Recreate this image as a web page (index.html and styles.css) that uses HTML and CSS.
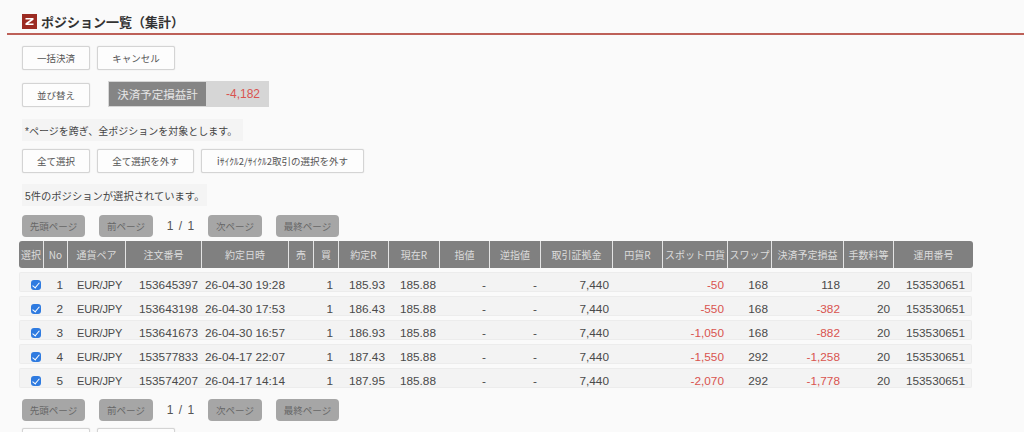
FILE: index.html
```html
<!DOCTYPE html>
<html lang="ja">
<head>
<meta charset="utf-8">
<title>ポジション一覧（集計）</title>
<link rel="stylesheet" href="styles.css">
</head>
<body>
<header class="title-bar">
  <svg class="logo" viewBox="0 0 15 15" aria-hidden="true"><rect width="15" height="15" fill="#9c2b22"/><path d="M3.5 4h8v1.8L6.2 9.4h5.3V11h-8V9.2l5.3-3.6H3.5z" fill="#fff"/></svg>
  <h1>ポジション一覧（集計）</h1>
</header>
<main class="content">
  <div class="btn-row r1">
    <button class="btn w68">一括決済</button>
    <button class="btn w78">キャンセル</button>
  </div>
  <div class="btn-row r2">
    <button class="btn w68">並び替え</button>
    <div class="summary"><span class="summary-label">決済予定損益計</span><span class="summary-value">-4,182</span></div>
  </div>
  <p class="note n1">*ページを跨ぎ、全ポジションを対象とします。</p>
  <div class="btn-row r3">
    <button class="btn w68">全て選択</button>
    <button class="btn w97">全て選択を外す</button>
    <button class="btn w163">iｻｲｸﾙ2/ｻｲｸﾙ2取引の選択を外す</button>
  </div>
  <p class="note n2">5件のポジションが選択されています。</p>
  <nav class="pager p1">
    <button class="pg w63">先頭ページ</button>
    <button class="pg w54">前ページ</button>
    <span class="pg-count">1 / 1</span>
    <button class="pg w54">次ページ</button>
    <button class="pg w63">最終ページ</button>
  </nav>
  <div class="table">
    <div class="grid head">
      <div>選択</div><div>No</div><div>通貨ペア</div><div>注文番号</div><div>約定日時</div><div>売</div><div>買</div><div>約定R</div><div>現在R</div><div>指値</div><div>逆指値</div><div>取引証拠金</div><div>円貨R</div><div>スポット円貨</div><div>スワップ</div><div>決済予定損益</div><div>手数料等</div><div>運用番号</div>
    </div>
    <div class="grid row">
      <div class="chk"><input type="checkbox" checked></div><div class="r">1</div><div class="l">EUR/JPY</div><div class="r">153645397</div><div class="r">26-04-30 19:28</div><div></div><div class="r">1</div><div class="r">185.93</div><div class="r">185.88</div><div class="r">-</div><div class="r">-</div><div class="r">7,440</div><div></div><div class="r neg">-50</div><div class="r">168</div><div class="r">118</div><div class="r">20</div><div class="r">153530651</div>
    </div>
    <div class="grid row">
      <div class="chk"><input type="checkbox" checked></div><div class="r">2</div><div class="l">EUR/JPY</div><div class="r">153643198</div><div class="r">26-04-30 17:53</div><div></div><div class="r">1</div><div class="r">186.43</div><div class="r">185.88</div><div class="r">-</div><div class="r">-</div><div class="r">7,440</div><div></div><div class="r neg">-550</div><div class="r">168</div><div class="r neg">-382</div><div class="r">20</div><div class="r">153530651</div>
    </div>
    <div class="grid row">
      <div class="chk"><input type="checkbox" checked></div><div class="r">3</div><div class="l">EUR/JPY</div><div class="r">153641673</div><div class="r">26-04-30 16:57</div><div></div><div class="r">1</div><div class="r">186.93</div><div class="r">185.88</div><div class="r">-</div><div class="r">-</div><div class="r">7,440</div><div></div><div class="r neg">-1,050</div><div class="r">168</div><div class="r neg">-882</div><div class="r">20</div><div class="r">153530651</div>
    </div>
    <div class="grid row">
      <div class="chk"><input type="checkbox" checked></div><div class="r">4</div><div class="l">EUR/JPY</div><div class="r">153577833</div><div class="r">26-04-17 22:07</div><div></div><div class="r">1</div><div class="r">187.43</div><div class="r">185.88</div><div class="r">-</div><div class="r">-</div><div class="r">7,440</div><div></div><div class="r neg">-1,550</div><div class="r">292</div><div class="r neg">-1,258</div><div class="r">20</div><div class="r">153530651</div>
    </div>
    <div class="grid row">
      <div class="chk"><input type="checkbox" checked></div><div class="r">5</div><div class="l">EUR/JPY</div><div class="r">153574207</div><div class="r">26-04-17 14:14</div><div></div><div class="r">1</div><div class="r">187.95</div><div class="r">185.88</div><div class="r">-</div><div class="r">-</div><div class="r">7,440</div><div></div><div class="r neg">-2,070</div><div class="r">292</div><div class="r neg">-1,778</div><div class="r">20</div><div class="r">153530651</div>
    </div>
  </div>
  <nav class="pager p2">
    <button class="pg w63">先頭ページ</button>
    <button class="pg w54">前ページ</button>
    <span class="pg-count">1 / 1</span>
    <button class="pg w54">次ページ</button>
    <button class="pg w63">最終ページ</button>
  </nav>
  <div class="btn-row r4">
    <button class="btn w68">一括決済</button>
    <button class="btn w78">キャンセル</button>
  </div>
</main>
</body>
</html>
```
FILE: styles.css
```css
* { box-sizing: border-box; }
html, body { margin: 0; height: 432px; overflow: hidden; }
body {
  background: #fafafa;
  color: #444;
  font-family: "Liberation Sans", "Noto Sans CJK JP", sans-serif;
  font-size: 10px;
}
.title-bar {
  margin-left: 7px;
  height: 35px;
  padding: 14px 0 0 15px;
  display: flex;
  align-items: flex-start;
  gap: 4px;
  border-bottom: 2px solid #bd6058;
}
.logo { width: 15px; height: 15px; flex: none; }
h1 {
  margin: 0;
  font-size: 13px;
  line-height: 15px;
  font-weight: 700;
  color: #333;
  font-family: "Noto Sans CJK JP", sans-serif;
}
.content { padding-left: 22px; }
.btn-row { display: flex; gap: 7px; }
.r1 { margin-top: 11px; }
.r2 { margin-top: 11px; align-items: flex-end; gap: 18px; }
.r3 { margin-top: 8px; }
.r4 { margin-top: 7px; }
.btn {
  height: 24px;
  padding: 0;
  background: #fdfdfd;
  border: 1px solid #d4d4d4;
  border-radius: 2px;
  box-shadow: 0 0 1px #ccc;
  color: #555;
  font: 9.5px "Noto Sans CJK JP", sans-serif;
}
.w68 { width: 68px; }
.w78 { width: 78px; }
.w97 { width: 97px; }
.w163 { width: 163px; }
.summary {
  width: 161px;
  height: 26px;
  padding: 1px 0 1px 1px;
  display: flex;
  align-items: stretch;
  background: #d6d6d6;
}
.summary-label {
  width: 97px;
  display: flex;
  align-items: center;
  justify-content: center;
  background: #858585;
  color: #e6e6e6;
  font-size: 11.5px;
}
.summary-value {
  flex: 1;
  display: flex;
  align-items: center;
  justify-content: flex-end;
  padding-right: 9px;
  color: #d9534f;
  font-size: 12px;
}
.note {
  margin: 0;
  height: 22px;
  width: max-content;
  padding: 0 6px 0 3px;
  display: flex;
  align-items: center;
  background: #f4f4f4;
  color: #444;
  font-size: 10px;
}
.n1 { margin-top: 12px; }
.n2 { margin-top: 11px; font-size: 10.3px; padding-right: 3px; }
.pager { display: flex; align-items: center; }
.p1 { margin-top: 9px; }
.p2 { margin-top: 11px; }
.pg {
  height: 22px;
  padding: 0;
  background: #a6a6a6;
  border: 0;
  border-radius: 4px;
  color: #666;
  font: 9.5px "Noto Sans CJK JP", sans-serif;
}
.w63 { width: 63px; }
.w54 { width: 54px; }
.pg.w63:first-child { margin-right: 14px; }
.pg.w54:nth-of-type(3) { margin-right: 14px; }
.pg-count {
  width: 55px;
  text-align: center;
  font-size: 12px;
  word-spacing: 2px;
  color: #555;
}
.table { margin: 4px 0 0 -3px; width: 954px; }
.grid {
  display: grid;
  grid-template-columns: 25px 24px 58px 76px 87px 25px 25px 50px 51px 50px 51px 72px 50px 65px 44px 72px 50px 79px;
}
.head {
  height: 27px;
  background: #808080;
  border-radius: 3px;
  color: #dcdcdc;
  font-size: 10px;
  font-family: "Noto Sans CJK JP", sans-serif;
  margin-bottom: 4px;
}
.head > div {
  display: flex;
  align-items: center;
  justify-content: center;
  white-space: nowrap;
  overflow: hidden;
  border-right: 1px solid #e4e4e4;
}
.head > div:last-child { border-right: 0; }
.row {
  height: 20px;
  margin: 0 1px 4px 0;
  background: #f3f3f3;
  box-shadow: inset 0 0 0 1px #ececec;
  border-radius: 2px;
  font-size: 11.8px;
  line-height: 26px;
  color: #4a4a4a;
}
.row > div { white-space: nowrap; }
.row .r { text-align: right; padding-right: 4px; }
.row .r:nth-child(2) { padding-right: 5px; }
.row .r:nth-child(7) { padding-right: 6px; }
.row .r:last-child { padding-right: 8px; }
.row .l { padding-left: 9px; font-size: 11px; letter-spacing: -0.2px; }
.row .neg { color: #d9534f; }
.chk { display: flex; align-items: center; justify-content: center; padding-left: 8px; height: 26px; }
.chk input {
  appearance: none;
  position: relative;
  width: 10px;
  height: 10px;
  margin: 0;
  background: #2f7be0;
  border-radius: 3px;
}
.chk input::after {
  content: "";
  position: absolute;
  left: 3px;
  top: 1px;
  width: 3px;
  height: 6px;
  border: solid #fff;
  border-width: 0 1.5px 1.5px 0;
  transform: rotate(40deg);
}
```
